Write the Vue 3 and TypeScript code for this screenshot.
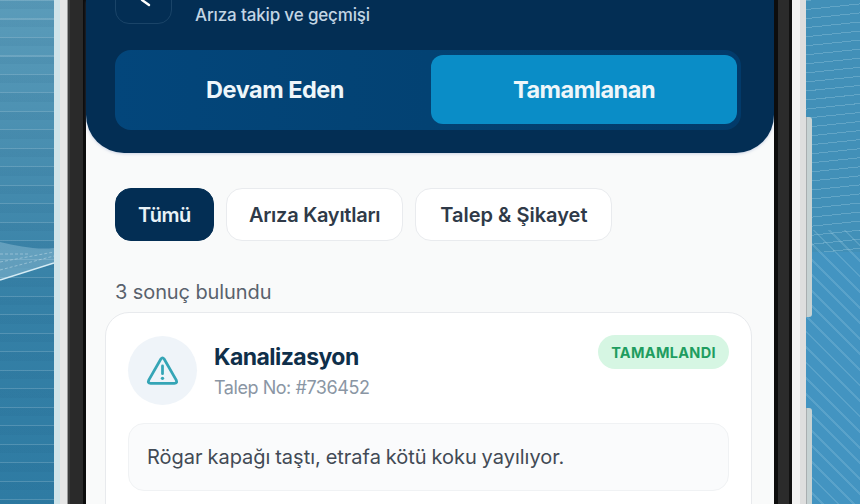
<script setup lang="ts">
const pills = [
  { label: 'Tümü', active: true, wide: false },
  { label: 'Arıza Kayıtları', active: false, wide: false },
  { label: 'Talep & Şikayet', active: false, wide: true },
]
</script>

<template>
  <div class="page">
    <aside class="backdrop left">
      <svg class="wave" width="54" height="60" viewBox="0 0 54 60">
        <path d="M0 50 L54 33 L54 18 C36 20 18 16 0 12Z" fill="#a9cfe2" opacity="0.38" />
        <path d="M0 40 L54 26 M0 32 L54 22 M0 24 L30 24" stroke="#dcedf6" stroke-width="1" stroke-dasharray="3 2" fill="none" opacity="0.4" />
        <path d="M0 50 L54 33" stroke="#d5ecf5" stroke-width="1.6" fill="none" />
      </svg>
    </aside>
    <div class="rim rim-left"></div>
    <div class="bezel"></div>
    <main class="screen">
      <header class="hero">
        <div class="title-row">
          <div class="back">
            <svg width="55" height="44" viewBox="0 0 55 44" fill="none">
              <path d="M26 21 L33 26" stroke="#fff" stroke-width="2.4" stroke-linecap="round" />
            </svg>
          </div>
          <p class="subtitle">Arıza takip ve geçmişi</p>
        </div>
        <div class="tabs">
          <div class="tab tab-idle">Devam Eden</div>
          <div class="tab tab-active">Tamamlanan</div>
        </div>
      </header>

      <section class="body">
        <nav class="pills">
          <span
            v-for="p in pills"
            :key="p.label"
            class="pill"
            :class="{ 'pill-active': p.active, 'pill-wide': p.wide }"
          >{{ p.label }}</span>
        </nav>
        <p class="count">3 sonuç bulundu</p>
        <article class="card">
          <div class="card-head">
            <div class="icon-circle">
              <svg width="33" height="33" viewBox="0 0 36 36" fill="none">
                <path d="M16.2 5.5 Q18 3 19.8 5.5 L33 28.5 Q34.4 32 31 32 H5 Q1.6 32 3 28.5 Z" stroke="#35a5b6" stroke-width="3" stroke-linejoin="round" />
                <path d="M18 13 V21.5" stroke="#35a5b6" stroke-width="3" stroke-linecap="round" />
                <circle cx="18" cy="26.5" r="1.8" fill="#35a5b6" />
              </svg>
            </div>
            <div class="heading">
              <h2>Kanalizasyon</h2>
              <p>Talep No: #736452</p>
            </div>
            <span class="badge">TAMAMLANDI</span>
          </div>
          <div class="desc">Rögar kapağı taştı, etrafa kötü koku yayılıyor.</div>
        </article>
      </section>
    </main>
    <div class="bezel bezel-right"></div>
    <div class="rim rim-right">
      <span class="side-key key-a"></span>
      <span class="side-key key-b"></span>
    </div>
    <aside class="backdrop right"></aside>
  </div>
</template>

<style>
html, body { margin: 0; background: #3f8fb5; }
</style>

<style scoped>
.page {
  display: flex;
  width: 860px;
  height: 504px;
  overflow: hidden;
  font-family: Inter, "Liberation Sans", sans-serif;
}
.backdrop { position: relative; flex: none; }
.left {
  width: 54px;
  background:
    repeating-linear-gradient(180deg, rgba(225, 243, 250, 0.2) 0 1px, transparent 1px 18.5px),
    repeating-linear-gradient(180deg, rgba(20, 80, 120, 0.08) 0 9px, transparent 9px 18.5px),
    linear-gradient(180deg, #5b9cba 0%, #3f87ab 45%, #3580a6 60%, #2e7ba3 100%);
}
.wave { position: absolute; left: 0; top: 230px; }
.right {
  flex: 1;
  background:
    linear-gradient(180deg, rgba(190, 226, 240, 0) 0 50%, #4394c1 50% 100%) no-repeat,
    repeating-linear-gradient(174deg, rgba(190, 226, 240, 0.26) 0 1px, transparent 1px 9px);
  background-color: #4290b8;
  position: relative;
}
.right::after {
  content: "";
  position: absolute;
  inset: 230px 0 0 0;
  background: repeating-linear-gradient(45deg, rgba(190, 226, 240, 0.18) 0 2px, transparent 2px 11px);
}
.rim { flex: none; width: 14px; position: relative; z-index: 1; }
.rim-left { background: linear-gradient(90deg, #cfe4ea 0 6px, #e6e6e6 6px 13px, #9a9a9a 13px); }
.rim-right { background: linear-gradient(90deg, #f2f2f2 0 8px, #dedede 8px 14px); }
.side-key {
  position: absolute;
  left: 14px;
  width: 6px;
  border-radius: 0 3px 3px 0;
  background: #c6d2d3;
  border-left: 1px solid #a9aeb0;
  box-sizing: border-box;
}
.key-a { top: 117px; height: 200px; }
.key-b { top: 408px; height: 120px; }
.bezel {
  flex: none;
  width: 18px;
  background: linear-gradient(90deg, #3a3a3a 0 2px, #2a2a2a 2px 15px, #0d0d0d 15px);
}
.bezel-right { background: linear-gradient(90deg, #0d0d0d 0 4px, #2b2b2b 4px 15px, #111 15px); }
.screen {
  flex: none;
  width: 688px;
  background: #f9fafa;
  display: flex;
  flex-direction: column;
}
.hero {
  flex: none;
  height: 153px;
  box-sizing: border-box;
  padding: 0 33px 23px 29px;
  background: #032e54;
  border-radius: 0 0 38px 38px;
  box-shadow: 0 1px 3px rgba(120, 140, 190, 0.35);
  display: flex;
  flex-direction: column;
  justify-content: flex-end;
  gap: 26px;
}
.title-row { display: flex; align-items: flex-end; gap: 23px; height: 24px; }
.back {
  width: 57px;
  height: 46px;
  flex: none;
  box-sizing: border-box;
  border: 1px solid #1a4468;
  border-radius: 14px;
}
.back svg { display: block; }
.subtitle {
  margin: 0 0 -3px;
  color: #c3d6e4;
  font-size: 17px;
  font-weight: 500;
  line-height: 24px;
  letter-spacing: -0.15px;
}
.tabs {
  display: flex;
  height: 80px;
  box-sizing: border-box;
  padding: 5px 4px 6px 0;
  background: linear-gradient(90deg, #03467b 0%, #034273 50%, #023a6a 100%);
  border-radius: 16px;
}
.tab {
  flex: 1;
  display: flex;
  align-items: center;
  justify-content: center;
  color: #eef6fa;
  font-size: 23.5px;
  font-weight: 700;
  letter-spacing: -0.5px;
  border-radius: 12px;
}
.tab-idle { padding-left: 4px; }
.tab-active {
  flex: none;
  width: 306px;
  background: #0a8dc7;
}
.body {
  flex: 1;
  padding: 35px 21px 0 19px;
}
.pills { display: flex; gap: 12px; padding-left: 10px; }
.pill {
  height: 53px;
  box-sizing: border-box;
  display: flex;
  align-items: center;
  padding: 0 22px;
  border-radius: 16px;
  background: #fff;
  border: 1px solid #e9ebee;
  color: #2f3a48;
  font-size: 20px;
  font-weight: 600;
  letter-spacing: -0.25px;
}
.pill-active {
  background: #032e54;
  border-color: #032e54;
  color: #e8f2f7;
  letter-spacing: -0.45px;
}
.pill-wide { padding: 0 24px; letter-spacing: 0; }
.count {
  margin: 38px 0 7px 10px;
  color: #59626d;
  font-size: 20px;
  line-height: 26px;
  letter-spacing: -0.1px;
}
.card {
  box-sizing: border-box;
  height: 240px;
  margin-right: 1px;
  padding: 23px 22px 0;
  background: #fff;
  border: 1px solid #e8eaed;
  border-radius: 24px;
}
.card-head { display: flex; align-items: flex-start; height: 87px; }
.icon-circle {
  width: 69px;
  height: 69px;
  flex: none;
  border-radius: 50%;
  background: #eff4f9;
  display: flex;
  align-items: center;
  justify-content: center;
}
.heading { flex: 1; margin-left: 17px; padding-top: 6px; }
.heading h2 {
  margin: 0;
  color: #0f2f4a;
  font-size: 23px;
  line-height: 30px;
  font-weight: 700;
  letter-spacing: -0.55px;
}
.heading p {
  margin: 4px 0 0;
  color: #8a96a4;
  font-size: 18px;
  line-height: 24px;
  letter-spacing: -0.45px;
}
.badge {
  height: 34px;
  width: 131px;
  margin-top: -1px;
  display: flex;
  align-items: center;
  justify-content: center;
  border-radius: 17px;
  background: #d6f6e3;
  color: #1f9d60;
  font-size: 14.5px;
  font-weight: 700;
  letter-spacing: 0.3px;
}
.desc {
  height: 68px;
  box-sizing: border-box;
  display: flex;
  align-items: center;
  padding-left: 18px;
  background: #fafbfc;
  border: 1px solid #f0f2f4;
  border-radius: 16px;
  color: #424a55;
  font-size: 20px;
  word-spacing: -0.8px;
}
</style>
